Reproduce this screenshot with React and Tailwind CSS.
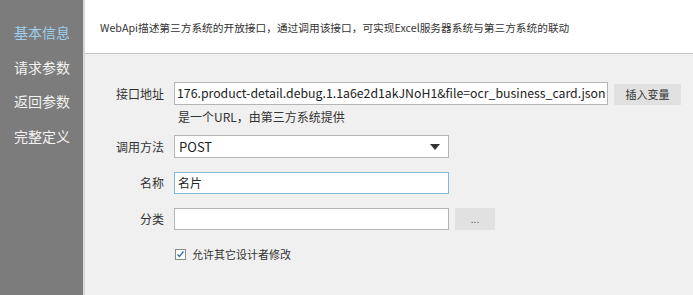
import React from "react";

const F = { fontFamily: '"Noto Sans CJK SC", "Noto Sans", sans-serif' };

export default function App() {
  return (
    <div className="flex w-[693px] h-[295px] overflow-hidden bg-[#f0f0f0] text-[#333]" style={F}>
      <div className="w-[85px] shrink-0 bg-[#7c7c7c] border-r-2 border-[#d8d8d8] flex flex-col pl-[14px] pt-[21px] gap-[12.5px] text-[14px] leading-[22px]">
        <div className="text-[#9fd0ee]">基本信息</div>
        <div className="text-[#f2f2f2]">请求参数</div>
        <div className="text-[#f2f2f2]">返回参数</div>
        <div className="text-[#f2f2f2]">完整定义</div>
      </div>
      <div className="flex-1 flex flex-col">
        <div className="h-[54px] shrink-0 bg-white border-b border-[#c8c8c8] flex items-center pl-[15px] pt-[3px] text-[10.7px] text-[#333]">
          WebApi描述第三方系统的开放接口，通过调用该接口，可实现Excel服务器系统与第三方系统的联动
        </div>
        <div className="flex flex-col pt-[28px] pl-[24px] text-[12px]">
          <div className="flex items-center h-[23px]">
            <div className="w-[57px] text-right pr-[2px]">接口地址</div>
            <div className="ml-[8px] w-[434px] h-[23px] bg-white border border-[#b4b4b4] flex items-center pl-[2px] overflow-hidden whitespace-nowrap text-[12.3px] text-[#222]">
              176.product-detail.debug.1.1a6e2d1akJNoH1&amp;file=ocr_business_card.json
            </div>
            <div className="ml-[6px] w-[67px] h-[21px] mt-[2px] bg-[#e1e1e1] flex items-center justify-center text-[11px] text-[#333]">插入变量</div>
          </div>
          <div className="ml-[69px] mt-[1px] h-[22px] flex items-center text-[12px]">是一个URL，由第三方系统提供</div>
          <div className="flex items-center h-[23px] mt-[7px]">
            <div className="w-[57px] text-right pr-[2px]">调用方法</div>
            <div className="ml-[8px] w-[275px] h-[23px] bg-white border border-[#b4b4b4] flex items-center justify-between pl-[4px] pr-[8px] text-[13px] text-[#222]">
              <span>POST</span>
              <svg width="10" height="6" viewBox="0 0 10 6"><path d="M0 0H10L5 6Z" fill="#333" /></svg>
            </div>
          </div>
          <div className="flex items-center h-[22px] mt-[14px]">
            <div className="w-[57px] text-right pr-[2px]">名称</div>
            <div className="ml-[8px] w-[275px] h-[22px] bg-white border border-[#86b9d6] flex items-center pl-[3px] text-[12px] text-[#222]">名片</div>
          </div>
          <div className="flex items-center h-[22px] mt-[14px]">
            <div className="w-[57px] text-right pr-[2px]">分类</div>
            <div className="ml-[8px] w-[275px] h-[22px] bg-white border border-[#b4b4b4]"></div>
            <div className="ml-[6px] w-[40px] h-[22px] bg-[#e1e1e1] flex items-center justify-center text-[10px] text-[#555] leading-none">...</div>
          </div>
          <div className="flex items-center ml-[66px] mt-[18px] h-[12px] gap-[6px]">
            <div className="w-[11px] h-[11px] bg-white border border-[#8a8a8a] flex items-center justify-center">
              <svg width="9" height="9" viewBox="0 0 9 9"><path d="M1.5 4.5L3.5 6.5L7.5 1.5" stroke="#3c76b5" strokeWidth="1.4" fill="none" /></svg>
            </div>
            <span className="text-[11px] text-[#333]">允许其它设计者修改</span>
          </div>
        </div>
      </div>
    </div>
  );
}
